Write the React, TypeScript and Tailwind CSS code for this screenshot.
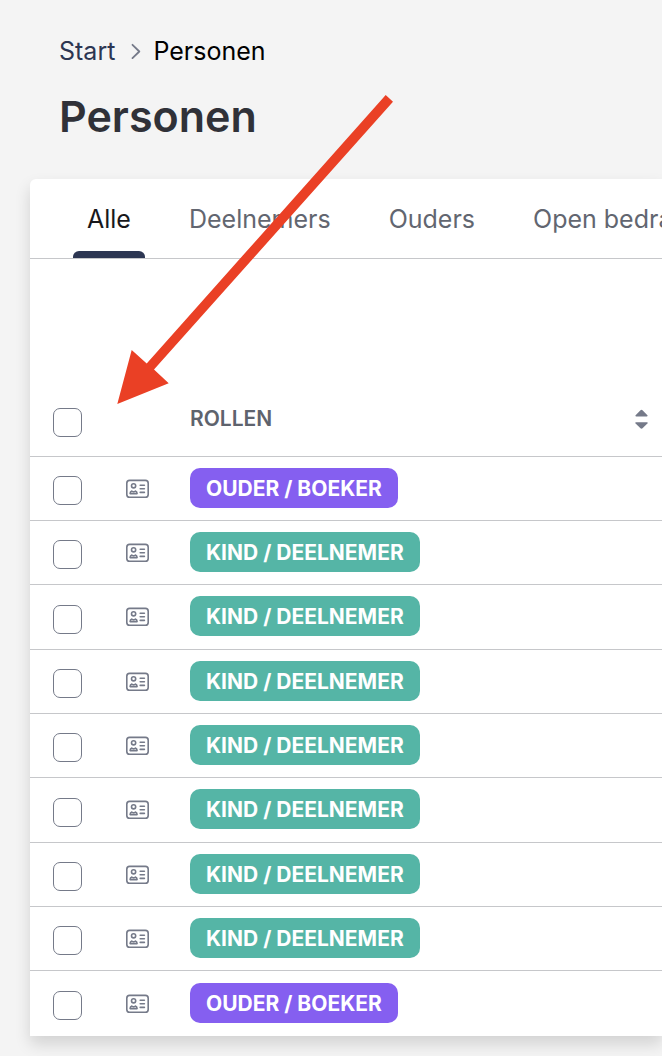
type Role = "parent" | "child";

const tabs = ["Alle", "Deelnemers", "Ouders", "Open bedragen"];

const people: { id: number; role: Role }[] = [
  { id: 1, role: "parent" },
  { id: 2, role: "child" },
  { id: 3, role: "child" },
  { id: 4, role: "child" },
  { id: 5, role: "child" },
  { id: 6, role: "child" },
  { id: 7, role: "child" },
  { id: 8, role: "child" },
  { id: 9, role: "parent" },
];

function Checkbox({ label }: { label: string }) {
  return (
    <input
      type="checkbox"
      aria-label={label}
      className="block size-[29px] appearance-none rounded-[7px] border border-[#757a89] bg-white checked:bg-[#2c3652]"
    />
  );
}

function IdCardIcon() {
  return (
    <svg
      viewBox="0 0 24 20"
      className="block h-5 w-6"
      fill="none"
      stroke="currentColor"
      strokeWidth="1.6"
      strokeLinecap="round"
      strokeLinejoin="round"
      aria-hidden="true"
    >
      <rect x="1.8" y="1.4" width="21.4" height="16.8" rx="2.8" />
      <circle cx="8.6" cy="6.8" r="2.1" />
      <path d="M5.1 14.6c0-1.5.7-2.3 1.7-2.6.6.5 1.1.7 1.8.7s1.2-.2 1.8-.7c1 .3 1.7 1.1 1.7 2.6z" />
      <path d="M15.2 6.2h4.2M15.2 9.8h4.2M15.2 13.4h4.2" />
    </svg>
  );
}

function RoleBadge({ role }: { role: Role }) {
  return (
    <span
      className={`inline-flex h-10 items-center rounded-[10px] px-4 pt-0.5 text-[21px] leading-8 font-bold whitespace-nowrap text-white ${
        role === "parent" ? "bg-[#855ff0]" : "bg-[#55b5a6]"
      }`}
    >
      {role === "parent" ? "OUDER / BOEKER" : "KIND / DEELNEMER"}
    </span>
  );
}

// Red pointer laid over the page, aimed at the "select all" checkbox
function PointerArrow() {
  return (
    <svg
      viewBox="0 0 280 312"
      className="pointer-events-none absolute top-[94px] left-[115px] h-[312px] w-[280px]"
      aria-hidden="true"
    >
      <path
        d="M270.7 1L278 7.7L39 275.6L53.7 289.2L2.3 310L16.7 256L31.7 269.4z"
        fill="#ea4025"
      />
    </svg>
  );
}

export default function App() {
  return (
    <div className="relative min-h-screen overflow-hidden bg-[#f4f4f4] pb-5 font-[Inter,sans-serif]">
      <header className="px-[59px] pt-9">
        <nav aria-label="Breadcrumb" className="flex items-center text-[25px] leading-[30px]">
          <a href="#start" className="text-[#2c3652]">
            Start
          </a>
          <svg
            viewBox="0 0 10 16"
            className="mr-3 ml-4 h-4 w-[10px] text-[#757a89]"
            fill="none"
            stroke="currentColor"
            strokeWidth="1.8"
            strokeLinecap="round"
            strokeLinejoin="round"
            aria-hidden="true"
          >
            <path d="M1.5 1.8L8.3 8.5l-6.8 6.7" />
          </svg>
          <span className="text-black" aria-current="page">
            Personen
          </span>
        </nav>
        <h1 className="mt-6 text-[43px] leading-[52px] font-semibold text-[#303138]">Personen</h1>
      </header>

      <main className="mt-[37px] ml-[30px] rounded-tl-[6px] bg-white shadow-[0_8px_16px_rgba(0,0,0,0.14)]">
        {/* Filter tabs */}
        <div role="tablist" className="flex h-20 gap-[30px] overflow-hidden border-b border-[#c6c7ca] pl-[43px]">
          {tabs.map((tab, i) => (
            <button
              key={tab}
              type="button"
              role="tab"
              aria-selected={i === 0}
              className={`flex shrink-0 flex-col items-center text-[25px] leading-[30px] whitespace-nowrap ${
                i === 0 ? "text-[#18181b]" : "text-[#626670]"
              }`}
            >
              <span className="mt-[25px] px-[14px]">{tab}</span>
              {i === 0 && <span className="mt-auto h-[7px] w-full rounded-t-[6px] bg-[#2c3652]" />}
            </button>
          ))}
        </div>

        <table className="mt-[121px] w-full table-fixed border-separate border-spacing-0">
          <colgroup>
            <col className="w-[95px]" />
            <col className="w-[65px]" />
            <col />
          </colgroup>
          <thead>
            <tr className="h-[77px]">
              <th className="border-b border-[#c6c7ca] pt-2 pl-[23px]">
                <Checkbox label="Alles selecteren" />
              </th>
              <th className="border-b border-[#c6c7ca]" />
              <th className="border-b border-[#c6c7ca] p-0 pt-0.5 pr-[13px] text-left">
                <button
                  type="button"
                  className="flex w-full items-center justify-between text-[21px] leading-8 font-semibold text-[#5e636d]"
                >
                  ROLLEN
                  <svg viewBox="0 0 15 22" className="h-[22px] w-[15px]" fill="#757a89" aria-hidden="true">
                    <path d="M7.5 1.8c.4 0 .7.2 1 .5l4.9 4.9c.5.6.2 1.2-.6 1.2H2.2c-.8 0-1.1-.6-.6-1.2l4.9-4.9c.3-.3.6-.5 1-.5z" />
                    <path d="M7.5 20.8c.4 0 .7-.2 1-.5l4.9-4.9c.5-.6.2-1.2-.6-1.2H2.2c-.8 0-1.1.6-.6 1.2l4.9 4.9c.3.3.6.5 1 .5z" />
                  </svg>
                </button>
              </th>
            </tr>
          </thead>
          <tbody>
            {people.map((person) => (
              <tr key={person.id} className="group h-16 nth-[3n]:h-[65px] last:h-[63px]">
                <td className="border-b border-[#c6c7ca] p-0 pt-1 pl-[23px] group-last:border-0">
                  <Checkbox label={`Persoon ${person.id} selecteren`} />
                </td>
                <td className="border-b border-[#c6c7ca] p-0 text-[#757a89] group-last:border-0">
                  <IdCardIcon />
                </td>
                <td className="border-b border-[#c6c7ca] p-0 pb-0.5 group-last:border-0">
                  <div className="flex">
                    <RoleBadge role={person.role} />
                  </div>
                </td>
              </tr>
            ))}
          </tbody>
        </table>
      </main>

      <PointerArrow />
    </div>
  );
}
